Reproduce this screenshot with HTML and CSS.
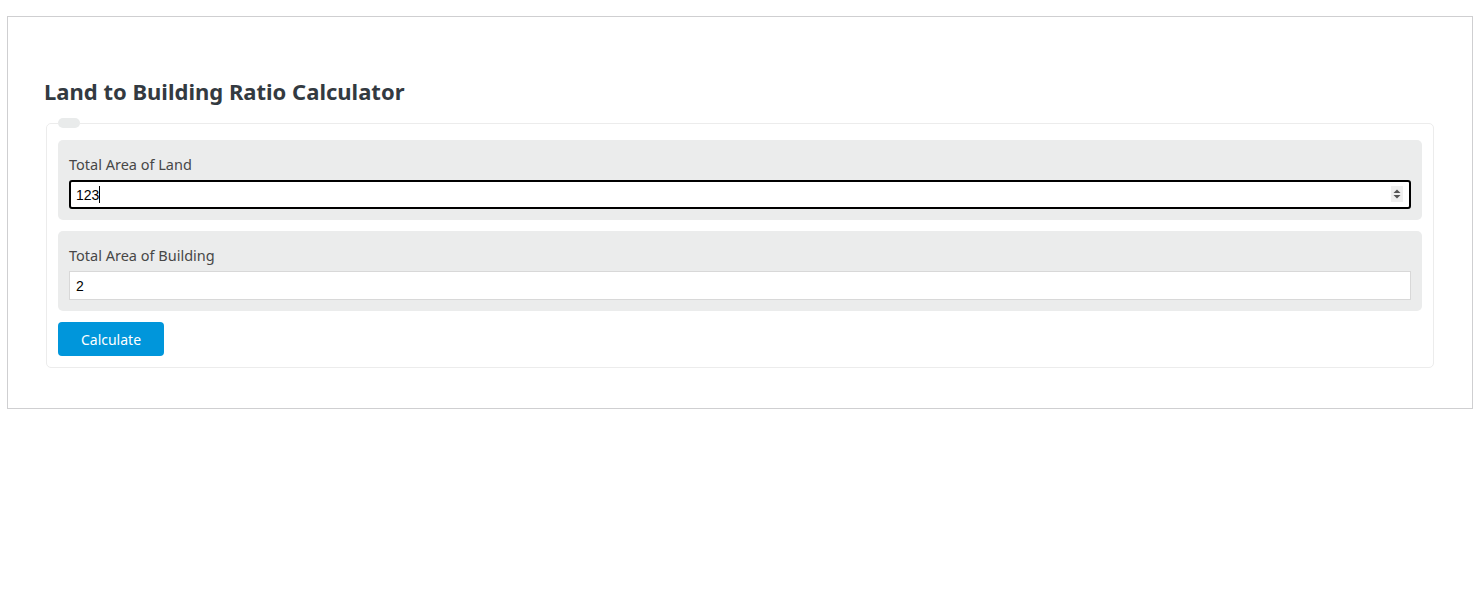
FILE: index.html
```html
<!DOCTYPE html>
<html lang="en">
<head>
<meta charset="utf-8">
<title>Land to Building Ratio Calculator</title>
<link rel="stylesheet" href="styles.css">
</head>
<body>
<div class="card">
  <h2 class="title">Land to Building Ratio Calculator</h2>
  <fieldset class="calc">
    <legend class="calc-legend"></legend>
    <div class="field">
      <label class="field-label" for="land">Total Area of Land</label>
      <div class="input-wrap">
        <input class="field-input is-focused" id="land" type="text" value="123">
        <span class="caret"></span>
        <svg class="spinner" width="12" height="16" viewBox="0 0 12 16" aria-hidden="true">
          <rect x="0" y="0" width="12" height="16" fill="#efefef"/>
          <path d="M6 3.5 L9.5 7 H2.5 Z" fill="#555"/>
          <path d="M6 12.5 L9.5 9 H2.5 Z" fill="#555"/>
        </svg>
      </div>
    </div>
    <div class="field">
      <label class="field-label" for="building">Total Area of Building</label>
      <div class="input-wrap">
        <input class="field-input" id="building" type="text" value="2">
      </div>
    </div>
    <button class="btn" type="button">Calculate</button>
  </fieldset>
</div>
</body>
</html>
```
FILE: styles.css
```css
html, body {
  margin: 0;
  padding: 0;
  background: #fff;
}
body {
  font-family: "Noto Sans", "Open Sans", sans-serif;
}
.card {
  margin: 16px 6px 0 7px;
  border: 1px solid #cfcfd1;
  padding: 61px 36px 40px;
}
.title {
  margin: 0 0 14px;
  font-size: 22px;
  line-height: 26px;
  font-weight: 700;
  color: #333a41;
}
.calc {
  margin: 0 2px;
  border: 1px solid #ececec;
  border-radius: 5px;
  padding: 0 11px 11px;
}
.calc-legend {
  width: 22px;
  height: 10px;
  padding: 0;
  margin-bottom: 12px;
  background: #e9ebeb;
  border-radius: 5px;
}
.field {
  background: #ebecec;
  border-radius: 5px;
  padding: 14px 11px 11px;
  margin-bottom: 11px;
}
.field-label {
  display: block;
  font-size: 14.5px;
  line-height: 20px;
  color: #474747;
  margin-bottom: 6px;
}
.input-wrap {
  position: relative;
}
.field-input {
  display: block;
  width: 100%;
  box-sizing: border-box;
  height: 29px;
  margin: 0;
  padding: 0 6px;
  border: 1px solid #d8d8d8;
  border-radius: 0;
  background: #fff;
  font-family: "Liberation Sans", Arial, sans-serif;
  font-size: 14px;
  color: #000;
  outline: none;
}
.field-input.is-focused {
  border: 2px solid #000;
  border-radius: 3px;
  padding: 0 5px;
}
.caret {
  position: absolute;
  left: 30px;
  top: 6px;
  width: 1px;
  height: 17px;
  background: #000;
}
.spinner {
  position: absolute;
  right: 8px;
  top: 6px;
}
.btn {
  display: block;
  width: 106px;
  height: 34px;
  border: 0;
  border-radius: 4px;
  background: #0096db;
  color: #fff;
  font-family: "Noto Sans", "Open Sans", sans-serif;
  font-size: 14px;
  padding: 0;
  cursor: pointer;
}
```
